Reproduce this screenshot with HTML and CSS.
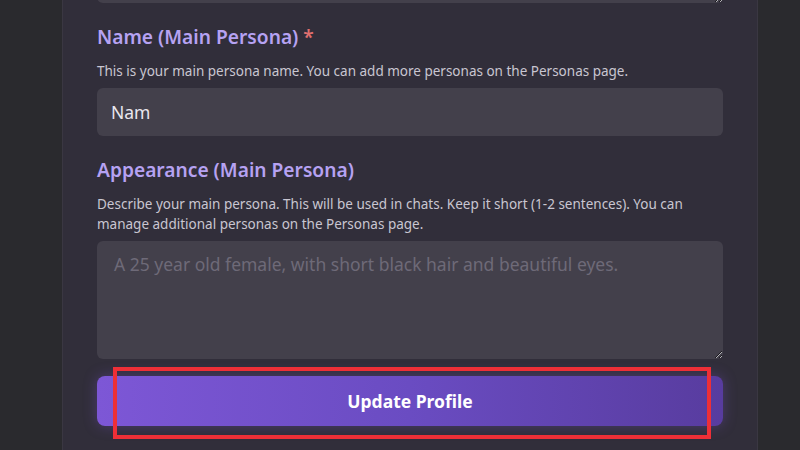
FILE: index.html
```html
<!DOCTYPE html>
<html>
<head>
<meta charset="utf-8">
<link rel="stylesheet" href="styles.css">
</head>
<body>
<div class="card">
  <textarea class="field area prev"></textarea>
  <div class="group">
    <label class="label">Name (Main Persona) <span class="req">*</span></label>
    <p class="help">This is your main persona name. You can add more personas on the Personas page.</p>
    <input class="field input" type="text" value="Nam">
  </div>
  <div class="group">
    <label class="label">Appearance (Main Persona)</label>
    <p class="help">Describe your main persona. This will be used in chats. Keep it short (1-2 sentences). You can manage additional personas on the Personas page.</p>
    <textarea class="field area desc" placeholder="A 25 year old female, with short black hair and beautiful eyes."></textarea>
  </div>
  <div class="btn-wrap">
    <button class="btn">Update Profile</button>
    <div class="highlight"></div>
  </div>
</div>
</body>
</html>
```
FILE: styles.css
```css
html, body {
  margin: 0;
  padding: 0;
  height: 100%;
  overflow: hidden;
}
body {
  background: #2a2a2e;
  font-family: "Noto Sans", "Open Sans", sans-serif;
}
.card {
  margin: 0 42px 0 62px;
  height: 100%;
  background: #312e3a;
  border-left: 1px solid #3a3742;
  border-right: 1px solid #3a3742;
  padding: 0 34px;
  display: flex;
  flex-direction: column;
}
.field {
  display: block;
  box-sizing: border-box;
  width: 100%;
  border: none;
  outline: none;
  background: #43404b;
  border-radius: 6px;
  font-family: inherit;
  color: #e9e7ee;
}
.prev {
  height: 100px;
  margin-top: -97px;
  resize: vertical;
}
.group {
  display: flex;
  flex-direction: column;
  margin-top: 22px;
}
.label {
  font-size: 19.2px;
  line-height: 24px;
  font-weight: 600;
  color: #b6a2f2;
}
.req {
  color: #e0706f;
}
.help {
  margin: 12px 0 7px;
  font-size: 13.5px;
  line-height: 20px;
  color: #c9c6d1;
}
.input {
  height: 48px;
  padding: 0 14px;
  font-size: 17.5px;
}
.desc {
  height: 118px;
  padding: 11px 17px;
  font-size: 17.5px;
  line-height: 24px;
  resize: vertical;
}
.desc::placeholder {
  color: #6e6a78;
}
.btn-wrap {
  position: relative;
  margin-top: 17px;
}
.btn {
  display: block;
  width: 100%;
  height: 50px;
  border: none;
  border-radius: 8px;
  background: linear-gradient(90deg, #7d57d6 0%, #6a4cc2 50%, #583c9f 100%);
  box-shadow: 0 0 14px rgba(125, 87, 214, 0.35);
  color: #ffffff;
  font-family: inherit;
  font-size: 17.5px;
  font-weight: 700;
}
.highlight {
  position: absolute;
  left: 16px;
  top: -9px;
  width: 598px;
  height: 72px;
  box-sizing: border-box;
  border: 4px solid #ee2f37;
}
```
